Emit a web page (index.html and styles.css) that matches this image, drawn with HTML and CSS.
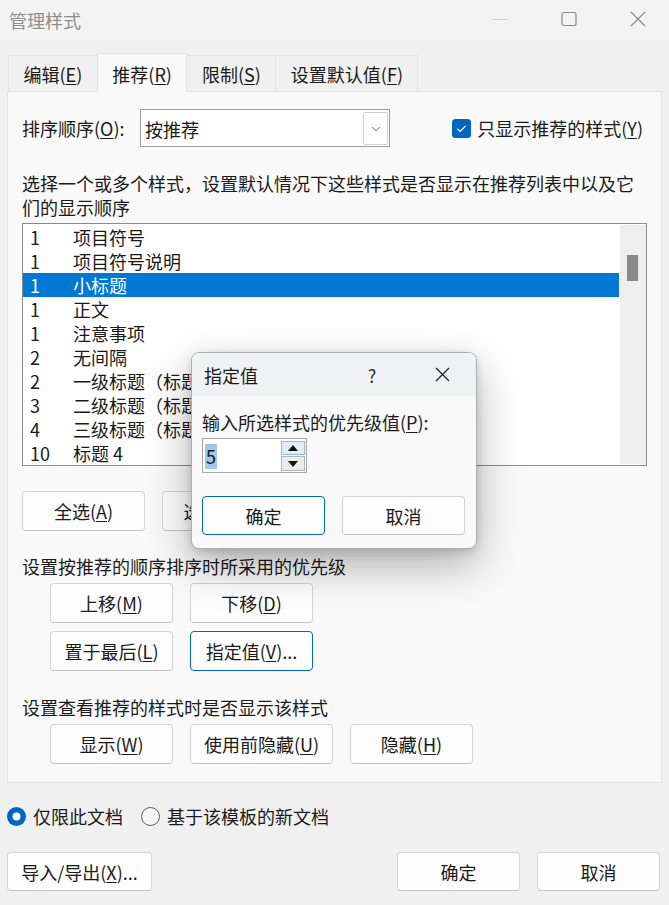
FILE: index.html
```html
<!DOCTYPE html>
<html lang="zh-CN">
<head>
<meta charset="utf-8">
<title>管理样式</title>
<link rel="stylesheet" href="styles.css">
</head>
<body>
<div class="window">
  <div class="titlebar">
    <span class="title">管理样式</span>
    <div class="controls">
      <svg width="16" height="16" viewBox="0 0 16 16"><line x1="0" y1="8.5" x2="16" y2="8.5" stroke="#cfcfcf" stroke-width="1"/></svg>
      <svg width="16" height="16" viewBox="0 0 16 16"><rect x="1" y="1.5" width="14" height="13" rx="2" fill="none" stroke="#8a8a8a" stroke-width="1.2"/></svg>
      <svg width="16" height="16" viewBox="0 0 16 16"><path d="M1 1 L15 15 M15 1 L1 15" stroke="#8a8a8a" stroke-width="1.2" fill="none"/></svg>
    </div>
  </div>

  <div class="tabs">
    <div class="tab">编辑(<u>E</u>)</div>
    <div class="tab active">推荐(<u>R</u>)</div>
    <div class="tab">限制(<u>S</u>)</div>
    <div class="tab">设置默认值(<u>F</u>)</div>
  </div>

  <div class="panel">
    <div class="sortrow">
      <span class="sortlbl">排序顺序(<u>O</u>):</span>
      <div class="select">
        <span class="sel-text">按推荐</span>
        <span class="sel-btn"><svg width="10" height="6" viewBox="0 0 10 6"><polyline points="1,0.8 5,4.8 9,0.8" fill="none" stroke="#6a6a6a" stroke-width="1"/></svg></span>
      </div>
      <div class="check">
        <svg class="cbox" width="19" height="19" viewBox="0 0 19 19"><rect x="0" y="0" width="19" height="19" rx="3.5" fill="#0067c0"/><polyline points="5.5,9.8 8.2,12.4 13.6,6.8" fill="none" stroke="#fff" stroke-width="1.2"/></svg>
        <span>只显示推荐的样式(<u>Y</u>)</span>
      </div>
    </div>

    <p class="desc">选择一个或多个样式，设置默认情况下这些样式是否显示在推荐列表中以及它们的显示顺序</p>

    <div class="listbox">
      <div class="items">
        <div class="row"><span class="num">1</span><span>项目符号</span></div>
        <div class="row"><span class="num">1</span><span>项目符号说明</span></div>
        <div class="row sel"><span class="num">1</span><span>小标题</span></div>
        <div class="row"><span class="num">1</span><span>正文</span></div>
        <div class="row"><span class="num">1</span><span>注意事项</span></div>
        <div class="row"><span class="num">2</span><span>无间隔</span></div>
        <div class="row"><span class="num">2</span><span>一级标题（标题 1）</span></div>
        <div class="row"><span class="num">3</span><span>二级标题（标题 2）</span></div>
        <div class="row"><span class="num">4</span><span>三级标题（标题 3）</span></div>
        <div class="row"><span class="num">10</span><span>标题 4</span></div>
      </div>
      <div class="track"><div class="thumb"></div></div>
    </div>

    <div class="btnrow first">
      <div class="btn">全选(<u>A</u>)</div>
      <div class="btn builtin">选择内置样式(<u>B</u>)</div>
    </div>

    <div class="sect">设置按推荐的顺序排序时所采用的优先级</div>
    <div class="btnrow indent">
      <div class="btn">上移(<u>M</u>)</div>
      <div class="btn">下移(<u>D</u>)</div>
    </div>
    <div class="btnrow indent second">
      <div class="btn">置于最后(<u>L</u>)</div>
      <div class="btn focus">指定值(<u>V</u>)...</div>
    </div>

    <div class="sect later">设置查看推荐的样式时是否显示该样式</div>
    <div class="btnrow indent">
      <div class="btn">显示(<u>W</u>)</div>
      <div class="btn wide">使用前隐藏(<u>U</u>)</div>
      <div class="btn">隐藏(<u>H</u>)</div>
    </div>
  </div>

  <div class="radios">
    <div class="radio">
      <svg width="19" height="19" viewBox="0 0 19 19"><circle cx="9.5" cy="9.5" r="9.5" fill="#0067c0"/><circle cx="9.5" cy="9.5" r="4" fill="#fff"/></svg>
      <span>仅限此文档</span>
    </div>
    <div class="radio">
      <svg width="19" height="19" viewBox="0 0 19 19"><circle cx="9.5" cy="9.5" r="9" fill="#f6f6f6" stroke="#5d5d5d" stroke-width="1"/></svg>
      <span>基于该模板的新文档</span>
    </div>
  </div>

  <div class="footer">
    <div class="btn export">导入/导出(<u>X</u>)...</div>
    <div class="btn ok">确定</div>
    <div class="btn">取消</div>
  </div>

  <div class="dialog">
    <div class="dtitle">
      <span>指定值</span>
      <span class="help">?</span>
      <svg class="dclose" width="15" height="15" viewBox="0 0 15 15"><path d="M1 1 L14 14 M14 1 L1 14" stroke="#222" stroke-width="1.3" fill="none"/></svg>
    </div>
    <div class="dbody">
      <div class="dlabel">输入所选样式的优先级值(<u>P</u>):</div>
      <div class="spin">
        <div class="spin-val"><span class="hl">5</span></div>
        <div class="spin-btns">
          <div class="sb up"><svg width="10" height="6" viewBox="0 0 10 6"><polygon points="5,0 10,6 0,6" fill="#111"/></svg></div>
          <div class="sb down"><svg width="10" height="6" viewBox="0 0 10 6"><polygon points="0,0 10,0 5,6" fill="#111"/></svg></div>
        </div>
      </div>
      <div class="dbtns">
        <div class="btn focus">确定</div>
        <div class="btn">取消</div>
      </div>
    </div>
  </div>
</div>
</body>
</html>
```
FILE: styles.css
```css
* { box-sizing: border-box; }
html, body { margin: 0; padding: 0; }
body {
  width: 669px;
  height: 905px;
  overflow: hidden;
  background: #f0f0f0;
  font-family: "Noto Sans CJK SC", "Noto Sans", sans-serif;
  font-size: 18px;
  color: #1a1a1a;
}
u {
  text-decoration: underline;
  text-decoration-thickness: 1px;
  text-underline-offset: 2px;
}
.window {
  position: relative;
  width: 669px;
  height: 905px;
  background: #f0f0f0;
}

/* title bar */
.titlebar {
  height: 40px;
  display: flex;
  align-items: center;
  padding-left: 9px;
  background: #f3f3f3;
}
.title { color: #8e8e8e; line-height: 24px; }
.controls {
  margin-left: auto;
  display: flex;
  align-items: center;
  gap: 53px;
  padding-right: 23px;
  margin-top: -3px;
}
.controls svg { display: block; }

/* tabs */
.tabs {
  display: flex;
  align-items: flex-end;
  height: 38px;
  margin-top: 13px;
  padding-left: 8px;
}
.tab {
  height: 36px;
  padding: 1px 14.5px 0;
  display: flex;
  align-items: center;
  line-height: 24px;
  background: #f0f0f0;
  border: 1px solid #e2e2e2;
  border-bottom: none;
  margin-left: -1px;
}
.tab:first-child { margin-left: 0; }
.tab.active {
  position: relative;
  z-index: 1;
  height: 39px;
  margin-bottom: -1px;
  background: #f9f9f9;
}

/* panel */
.panel {
  margin: 0 7px;
  height: 692px;
  background: #f9f9f9;
  border: 1px solid #e2e2e2;
  padding: 17px 18px 18px 14px;
}
.sortrow {
  display: flex;
  align-items: center;
  height: 38px;
}
.sortlbl { width: 118px; line-height: 24px; }
.select {
  width: 250px;
  height: 38px;
  display: flex;
  background: #fff;
  border: 1px solid #9c9c9c;
  padding: 2px 1px 1px 4px;
}
.sel-text {
  flex: 1;
  display: flex;
  align-items: center;
  line-height: 24px;
}
.sel-btn {
  width: 25px;
  display: flex;
  align-items: center;
  justify-content: center;
  border: 1px solid #cfcfcf;
  border-radius: 2px;
  background: #fff;
}
.sel-btn svg { display: block; }
.check {
  margin-left: auto;
  display: flex;
  align-items: center;
  gap: 6px;
  line-height: 24px;
}
.cbox { display: block; }

.desc {
  margin: 24px 0 4px;
  max-width: 620px;
  line-height: 24px;
}

/* list */
.listbox {
  width: 625px;
  height: 243px;
  display: flex;
  background: #fff;
  border: 1px solid #8b8b8b;
}
.items {
  flex: 1;
  padding-top: 1px;
  overflow: hidden;
}
.row {
  display: flex;
  height: 24px;
  line-height: 24px;
  white-space: nowrap;
}
.row.sel { background: #0078d4; color: #fff; }
.num { width: 50px; padding-left: 7px; flex: none; }
.track {
  width: 26px;
  margin: 1px 0 1px 1px;
  background: #eeeeee;
  padding: 30px 0 0 7px;
}
.thumb {
  width: 11px;
  height: 26px;
  background: #8a8a8a;
}

/* buttons */
.btnrow {
  display: flex;
  gap: 17px;
  margin-top: 5px;
}
.btnrow.first { margin-top: 25px; }
.btnrow.second { margin-top: 8px; }
.btnrow.indent { padding-left: 28px; }
.btn {
  width: 123px;
  height: 40px;
  flex: none;
  display: flex;
  align-items: center;
  justify-content: center;
  line-height: 24px;
  white-space: nowrap;
  background: #fdfdfd;
  border: 1px solid #d4d4d4;
  border-bottom-color: #c4c4c4;
  border-radius: 4px;
}
.btn.wide { width: 143px; }
.btn.builtin { width: 175px; }
.btn.focus { border-color: #0067c0; }
.sect {
  margin-top: 23px;
  line-height: 24px;
}
.sect.later { margin-top: 24px; }

/* radios */
.radios {
  display: flex;
  align-items: center;
  height: 24px;
  margin-top: 21px;
  padding-left: 7px;
  gap: 18px;
  line-height: 24px;
}
.radio { display: flex; align-items: center; gap: 7px; }
.radio svg { display: block; }

/* footer */
.footer {
  display: flex;
  gap: 17px;
  margin-top: 24px;
  padding: 0 9px 0 7px;
}
.footer .btn { height: 39px; }
.btn.export { width: 145px; }
.btn.ok { margin-left: auto; }

/* modal dialog (overlays the window) */
.dialog {
  position: absolute;
  left: 191px;
  top: 352px;
  width: 286px;
  height: 197px;
  background: #f9f9f9;
  border: 1px solid #aeaeae;
  border-radius: 8px;
  overflow: hidden;
  box-shadow: 0 16px 44px rgba(0, 0, 0, 0.30), 0 3px 10px rgba(0, 0, 0, 0.14);
  z-index: 5;
}
.dtitle {
  height: 43px;
  display: flex;
  align-items: center;
  padding: 0 26px 0 12px;
  background: #f0f1f4;
  line-height: 24px;
}
.help {
  margin-left: auto;
  width: 20px;
  text-align: center;
  color: #333;
  margin-right: 53px;
}
.dclose { display: block; }
.dbody { padding: 14px 11px 0 10px; }
.dlabel { line-height: 24px; }
.spin {
  margin-top: 4px;
  width: 105px;
  height: 35px;
  display: flex;
  background: #fff;
  border: 1px solid #a8a8a8;
  padding: 2px 1px 1px 2px;
}
.spin-val {
  flex: 1;
  display: flex;
  align-items: center;
}
.hl {
  background: #9ec8ec;
  line-height: 25px;
  padding: 0 1px;
}
.spin-btns {
  width: 24px;
  display: flex;
  flex-direction: column;
  gap: 1px;
}
.sb {
  display: flex;
  align-items: center;
  justify-content: center;
}
.sb svg { display: block; }
.sb.up { height: 14px; background: #e2eefb; border: 1px solid #8fbbe8; }
.sb.down { height: 15px; background: #ebebeb; border: 1px solid #b5b5b5; }
.dbtns {
  display: flex;
  gap: 17px;
  margin-top: 23px;
}
.dbtns .btn { height: 39px; }
```
